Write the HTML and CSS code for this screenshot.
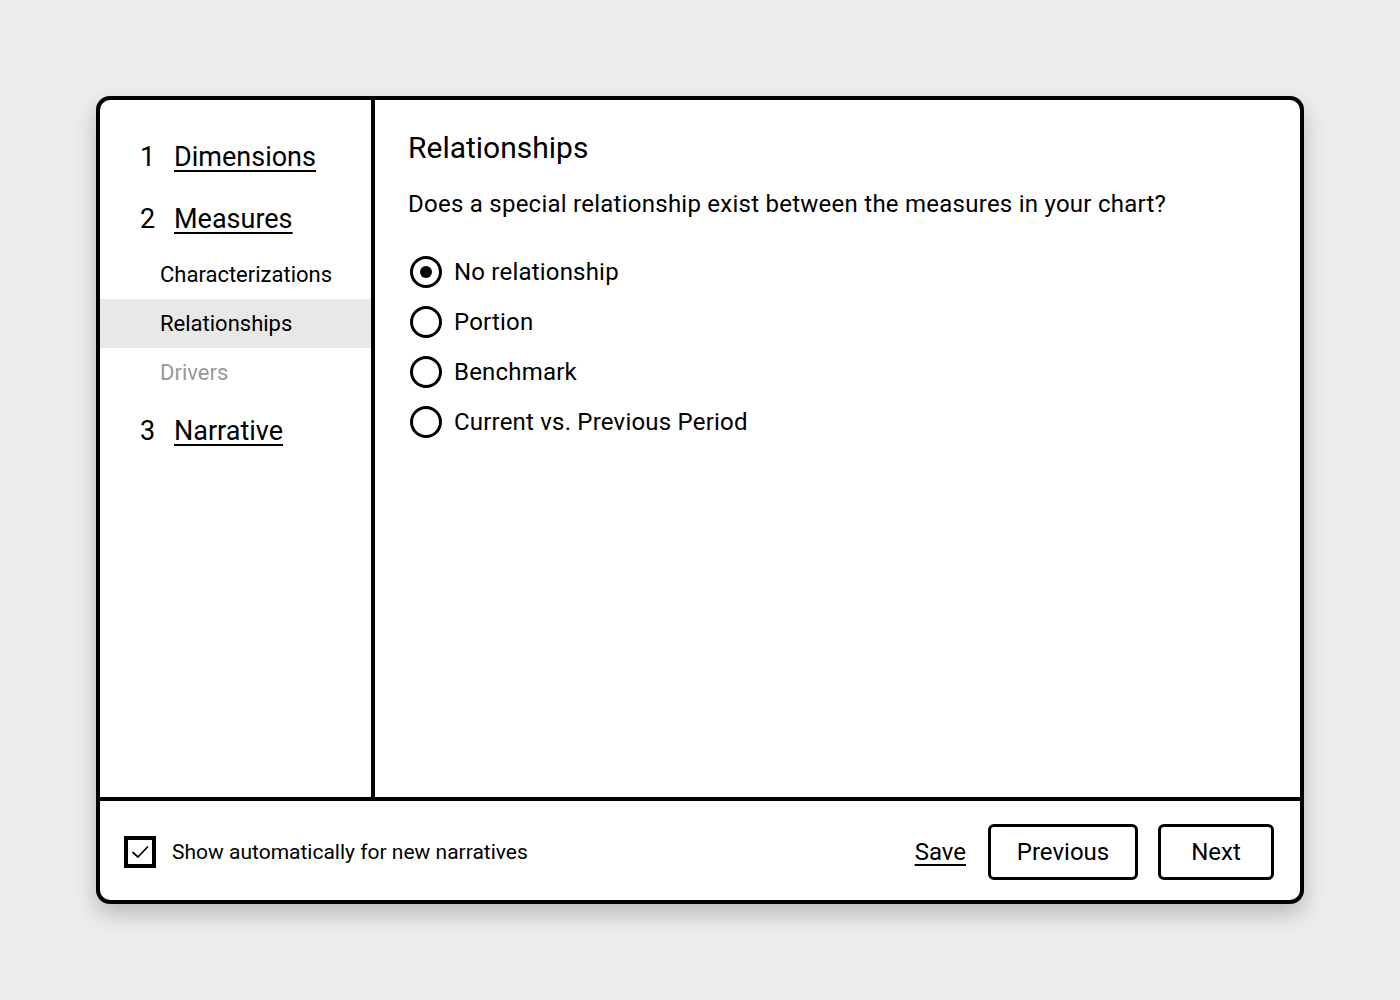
FILE: index.html
```html
<!DOCTYPE html>
<html lang="en">
<head>
<meta charset="utf-8">
<title>Narrative setup</title>
<link rel="stylesheet" href="styles.css">
</head>
<body>
<div class="dialog">
  <div class="dialog-body">
    <nav class="sidebar">
      <div class="step"><span class="step-num">1</span><a class="step-link" href="#">Dimensions</a></div>
      <div class="step"><span class="step-num">2</span><a class="step-link" href="#">Measures</a></div>
      <div class="sub">Characterizations</div>
      <div class="sub sub-active">Relationships</div>
      <div class="sub sub-disabled">Drivers</div>
      <div class="step step-last"><span class="step-num">3</span><a class="step-link" href="#">Narrative</a></div>
    </nav>
    <main class="content">
      <h1 class="title">Relationships</h1>
      <p class="question">Does a special relationship exist between the measures in your chart?</p>
      <div class="options">
        <label class="option"><span class="radio radio-on"></span><span>No relationship</span></label>
        <label class="option"><span class="radio"></span><span>Portion</span></label>
        <label class="option"><span class="radio"></span><span>Benchmark</span></label>
        <label class="option"><span class="radio"></span><span>Current vs. Previous Period</span></label>
      </div>
    </main>
  </div>
  <footer class="footer">
    <label class="auto">
      <span class="checkbox">
        <svg width="24" height="24" viewBox="0 0 24 24"><path d="M5 12.5 L10 17 L19.5 7" fill="none" stroke="#000" stroke-width="1.7" stroke-linecap="round" stroke-linejoin="round"/></svg>
      </span>
      <span class="auto-label">Show automatically for new narratives</span>
    </label>
    <div class="actions">
      <a class="save" href="#">Save</a>
      <button class="btn btn-prev">Previous</button>
      <button class="btn btn-next">Next</button>
    </div>
  </footer>
</div>
</body>
</html>
```

FILE: styles.css
```css
html, body {
  margin: 0;
  padding: 0;
}
body {
  background: #ededed;
  height: 100vh;
  display: flex;
  align-items: center;
  justify-content: center;
  font-family: Roboto, "Liberation Sans", sans-serif;
  color: #000;
}
.dialog {
  box-sizing: border-box;
  width: 1208px;
  height: 808px;
  background: #fff;
  border: 4px solid #000;
  border-radius: 14px;
  box-shadow: 0 10px 22px rgba(0, 0, 0, 0.22);
  display: flex;
  flex-direction: column;
  overflow: hidden;
}
.dialog-body {
  flex: 1;
  display: flex;
  border-bottom: 4px solid #000;
}
.sidebar {
  width: 271px;
  border-right: 4px solid #000;
  padding-top: 26px;
}
.step {
  height: 62px;
  display: flex;
  align-items: center;
  padding-left: 40px;
  font-size: 27px;
}
.step-num {
  width: 34px;
}
.step-link {
  color: #000;
  text-decoration: underline;
  text-underline-offset: 4px;
  text-decoration-thickness: 2px;
}
.step-last {
  margin-top: 3px;
}
.sub {
  height: 49px;
  display: flex;
  align-items: center;
  padding-left: 60px;
  font-size: 22px;
}
.sub-active {
  background: #e8e8e8;
}
.sub-disabled {
  color: #999;
}
.content {
  flex: 1;
  padding: 26px 33px;
}
.title {
  margin: 0;
  font-size: 30px;
  font-weight: 400;
  line-height: 44px;
}
.question {
  margin: 18px 0 0;
  font-size: 24px;
  line-height: 32px;
  letter-spacing: 0.25px;
}
.options {
  margin-top: 27px;
  display: flex;
  flex-direction: column;
}
.option {
  height: 50px;
  display: flex;
  align-items: center;
  font-size: 24px;
  letter-spacing: 0.2px;
}
.radio {
  box-sizing: border-box;
  width: 32px;
  height: 32px;
  border: 3px solid #000;
  border-radius: 50%;
  margin-left: 2px;
  margin-right: 12px;
  display: flex;
  align-items: center;
  justify-content: center;
}
.radio-on::after {
  content: "";
  width: 12px;
  height: 12px;
  border-radius: 50%;
  background: #000;
}
.footer {
  box-sizing: border-box;
  height: 99px;
  display: flex;
  align-items: center;
  justify-content: space-between;
  padding: 2px 26px 0 24px;
}
.auto {
  display: flex;
  align-items: center;
}
.checkbox {
  box-sizing: border-box;
  width: 32px;
  height: 32px;
  border: 4px solid #000;
  display: flex;
  align-items: center;
  justify-content: center;
  margin-right: 16px;
}
.auto-label {
  font-size: 21px;
}
.actions {
  display: flex;
  align-items: center;
  gap: 20px;
}
.save {
  color: #000;
  font-size: 24px;
  text-decoration: underline;
  text-underline-offset: 4px;
  text-decoration-thickness: 2px;
  margin-right: 2px;
}
.btn {
  box-sizing: border-box;
  height: 56px;
  border: 3px solid #000;
  border-radius: 6px;
  background: #fff;
  font-family: inherit;
  font-size: 24px;
  color: #000;
  padding: 0;
}
.btn-prev {
  width: 150px;
}
.btn-next {
  width: 116px;
}
```
